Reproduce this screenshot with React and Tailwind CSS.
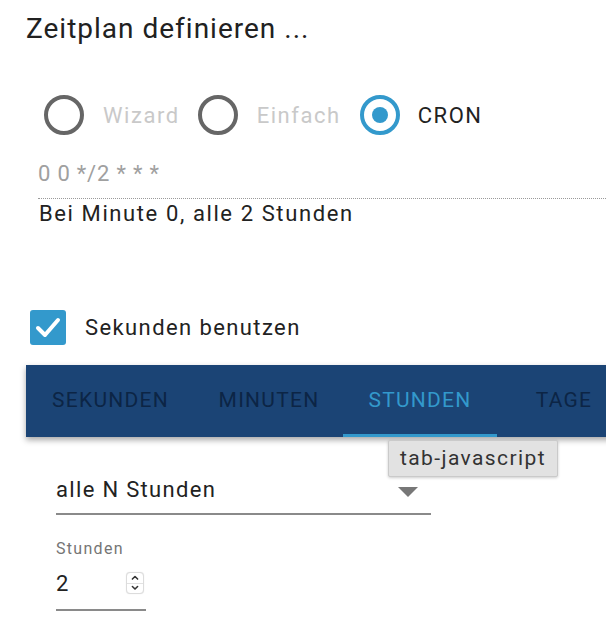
import React from "react";

function Radio({ checked }) {
  return (
    <div
      className={
        checked
          ? "w-[40px] h-[40px] rounded-full border-[4px] border-[#3399cc] flex items-center justify-center shrink-0"
          : "w-[40px] h-[40px] rounded-full border-[4px] border-[#666666] shrink-0"
      }
    >
      {checked && <div className="w-[16px] h-[16px] rounded-full bg-[#3399cc]" />}
    </div>
  );
}

function Spinner() {
  return (
    <div className="w-[18px] h-[22px] rounded-[4px] border border-[#dcdcdc] bg-white flex flex-col items-center shadow-[0_0_1px_rgba(0,0,0,0.15)]">
      <svg viewBox="0 0 18 11" width="18" height="10">
        <path d="M6 7 L9 4 L12 7" fill="none" stroke="#333" strokeWidth="1.8" strokeLinecap="round" strokeLinejoin="round" />
      </svg>
      <div className="w-full h-px bg-[#e2e2e2]" />
      <svg viewBox="0 0 18 11" width="18" height="10">
        <path d="M6 4 L9 7 L12 4" fill="none" stroke="#333" strokeWidth="1.8" strokeLinecap="round" strokeLinejoin="round" />
      </svg>
    </div>
  );
}

const tabs = [
  { label: "SEKUNDEN", w: "w-[169px]" },
  { label: "MINUTEN", w: "w-[148px]" },
  { label: "STUNDEN", w: "w-[154px]", active: true },
  { label: "TAGE", w: "w-[134px]" },
];

export default function App() {
  return (
    <div className="relative w-[606px] h-[642px] overflow-hidden bg-white font-['Roboto',sans-serif]">
      <h1 className="pl-[26px] pt-[14px] text-[28px] leading-[30px] tracking-[1px] text-[#212121]">
        Zeitplan definieren ...
      </h1>

      <div className="mt-[51px] h-[40px] flex items-center pl-[44px] text-[22px] tracking-[0.07em]">
        <Radio />
        <span className="ml-[19px] text-[#c9c9c9]">Wizard</span>
        <div className="ml-[18px]">
          <Radio />
        </div>
        <span className="ml-[19px] text-[#c9c9c9]">Einfach</span>
        <div className="ml-[19px]">
          <Radio checked />
        </div>
        <span className="ml-[18px] text-[#222]">CRON</span>
      </div>

      <div className="mt-[24px] ml-[38px] pb-[9px] border-b border-dotted border-[#9a9a9a]">
        <div className="leading-[30px] text-[22px] tracking-[0.8px] text-[#a0a0a0]">0 0 */2 * * *</div>
      </div>

      <div className="mt-[1px] ml-[39px] leading-[28px] text-[22px] tracking-[1.6px] text-[#222]">
        Bei Minute 0, alle 2 Stunden
      </div>

      <div className="mt-[81px] h-[36px] flex items-center pl-[30px]">
        <div className="w-[36px] h-[35px] rounded-[3px] bg-[#3399cc] flex items-center justify-center">
          <svg viewBox="0 0 36 35" width="36" height="35">
            <path d="M8 18 L15 25 L28 10" fill="none" stroke="white" strokeWidth="4" strokeLinecap="round" strokeLinejoin="round" />
          </svg>
        </div>
        <span className="ml-[19px] text-[22px] tracking-[1.4px] text-[#222]">Sekunden benutzen</span>
      </div>

      <div className="mt-[20px] ml-[26px] w-[620px] h-[72px] bg-[#1b4475] flex shadow-[0_3px_6px_rgba(0,0,0,0.35)]">
        {tabs.map((t) => (
          <div key={t.label} className={`${t.w} relative flex items-center justify-center shrink-0`}>
            <span
              className={
                t.active
                  ? "text-[21px] tracking-[0.06em] text-[#3399cc]"
                  : "text-[21px] tracking-[0.06em] text-[#0c2545]"
              }
            >
              {t.label}
            </span>
            {t.active && <div className="absolute left-0 right-0 bottom-0 h-[3px] bg-[#3399cc]" />}
          </div>
        ))}
      </div>

      <div className="mt-[37px] ml-[56px] w-[375px] pb-[9px] border-b-2 border-[#8a8a8a]">
        <div className="h-[30px] flex items-center justify-between pr-[13px]">
          <span className="text-[22px] tracking-[0.06em] text-[#222]">alle N Stunden</span>
          <svg viewBox="0 0 20 10" width="20" height="10" className="mt-[6px]">
            <path d="M0 0 L20 0 L10 10 Z" fill="#777" />
          </svg>
        </div>
      </div>

      <div className="mt-[24px] ml-[56px] leading-[20px] text-[16px] tracking-[1.3px] text-[#757575]">Stunden</div>

      <div className="mt-[9px] ml-[56px] w-[90px] pb-[11px] border-b-2 border-[#8a8a8a]">
        <div className="h-[30px] flex items-center justify-between pr-[2px]">
          <span className="text-[22px] text-[#222]">2</span>
          <Spinner />
        </div>
      </div>

      <div className="absolute left-[388px] top-[440px] w-[170px] h-[37px] bg-[#e2e2e2] border border-[#cacaca] rounded-[2px] shadow-[0_1px_3px_rgba(0,0,0,0.2)] flex items-center justify-center">
        <span className="text-[21px] tracking-[1.4px] text-[#333]">tab-javascript</span>
      </div>
    </div>
  );
}
